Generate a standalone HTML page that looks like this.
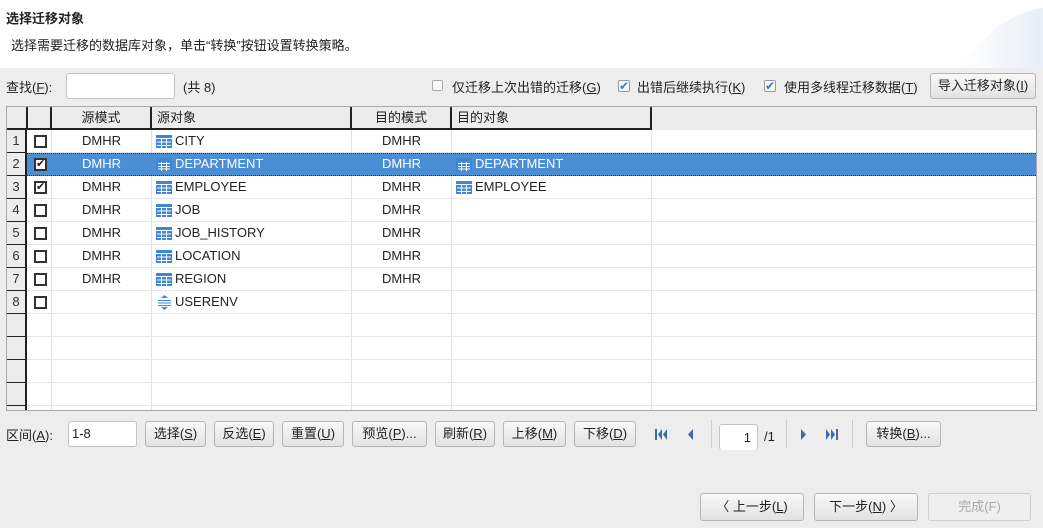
<!DOCTYPE html>
<html><head><meta charset="utf-8"><style>
*{margin:0;padding:0;box-sizing:border-box}
body{width:1043px;height:528px;background:#ededed;font:13px "Liberation Sans","Noto Sans CJK SC",sans-serif;color:#222;position:relative;overflow:hidden}
.a{position:absolute;white-space:nowrap}
.hdr{left:0;top:0;width:1043px;height:68px;background:#fff}
.btn{position:absolute;height:26px;border:1px solid #b5b5b5;border-radius:3px;background:linear-gradient(#f8f8f8,#e2e2e2);text-align:center;line-height:24px;font-size:13px;color:#222}
.inp{position:absolute;height:26px;border:1px solid #c3c3c3;border-radius:3px;background:#fff}
.tbl{left:6px;top:106px;width:1031px;height:305px;background:#fff;border:1px solid #a9a9a9;overflow:hidden}
.row{position:absolute;left:0;width:1031px;height:23px;border-bottom:1px solid #e6e6e6}
.num{position:absolute;left:0;top:0;width:20px;height:23px;background:#ececec;border-right:2px solid #222;border-bottom:1px solid #222;text-align:center;line-height:22px;font-size:13px;color:#333}
.c{position:absolute;top:0;line-height:22px}
.vl{position:absolute;top:0;width:1px;height:305px;background:#e3e3e3}
.cb{position:absolute;left:27px;top:5px;width:13px;height:13px;border:2px solid #333;background:#fff;font-size:11px;line-height:9px;text-align:center;color:#222}
.th{position:absolute;top:0;height:23px;background:#ececec;border-right:2px solid #222;border-bottom:2px solid #222;line-height:21px;font-size:13px}
.sel{background:#4a8fd6;color:#fff;border-top:1px dotted #333;border-bottom:1px dotted #333}
u{text-decoration:underline}
</style></head><body>
<div class="a hdr"></div>
<svg class="a" style="left:950px;top:0" width="93" height="68"><defs><linearGradient id="g" x1="0" x2="1"><stop offset="0" stop-color="#fff"/><stop offset="1" stop-color="#e8edf6"/></linearGradient></defs><path d="M10 68 Q45 15 93 8 L93 68Z" fill="url(#g)"/></svg>
<div class="a" style="left:6px;top:8px;font-weight:bold;font-size:13px">选择迁移对象</div>
<div class="a" style="left:11px;top:35px">选择需要迁移的数据库对象，单击“转换”按钮设置转换策略。</div>

<div class="a" style="left:6px;top:77px">查找(<u>F</u>):</div>
<div class="inp" style="left:66px;top:73px;width:109px"></div>
<div class="a" style="left:183px;top:77px">(共 8)</div>
<div class="a" style="left:432px;top:80px;width:11px;height:11px;border:1px solid #aaa;border-radius:2px;background:#fafafa"></div>
<div class="a" style="left:452px;top:77px">仅迁移上次出错的迁移(<u>G</u>)</div>
<div class="a" style="left:618px;top:80px;width:12px;height:12px;border:1px solid #999;border-radius:2px;background:#fafafa;color:#3a78c0;font-size:12px;line-height:10px;text-align:center">✔</div>
<div class="a" style="left:637px;top:77px">出错后继续执行(<u>K</u>)</div>
<div class="a" style="left:764px;top:80px;width:12px;height:12px;border:1px solid #999;border-radius:2px;background:#fafafa;color:#3a78c0;font-size:12px;line-height:10px;text-align:center">✔</div>
<div class="a" style="left:784px;top:77px">使用多线程迁移数据(<u>T</u>)</div>
<div class="btn" style="left:930px;top:73px;width:106px">导入迁移对象(<u>I</u>)</div>

<div class="a tbl">
<div class="vl" style="left:44px"></div><div class="vl" style="left:144px"></div><div class="vl" style="left:344px"></div><div class="vl" style="left:444px"></div><div class="vl" style="left:644px"></div>
<div class="th" style="left:0;width:21px"></div>
<div class="th" style="left:21px;width:24px"></div>
<div class="th" style="left:45px;width:100px;text-align:center">源模式</div>
<div class="th" style="left:145px;width:200px;padding-left:5px">源对象</div>
<div class="th" style="left:345px;width:100px;text-align:center">目的模式</div>
<div class="th" style="left:445px;width:200px;padding-left:5px">目的对象</div>
<div class="th" style="left:645px;width:400px;border:none;background:#ececec"></div>

<div class="row" style="top:23px"><div class="num">1</div><div class="cb"></div><div class="c" style="left:75px">DMHR</div><svg class="c" style="left:149px;top:5px" width="16" height="13"><rect width="16" height="13" fill="#3d86d8"/><path d="M0 3.5H16M1 7H15M1 10.5H15M5.5 4V13M10.5 4V13" stroke="#fff"/></svg><div class="c" style="left:168px">CITY</div><div class="c" style="left:375px">DMHR</div></div>
<div class="row sel" style="top:46px"><div class="num" style="top:-1px;height:23px">2</div><div class="cb" style="top:4px">&#10004;</div><div class="c" style="left:75px;top:-1px">DMHR</div><svg class="c" style="left:149px;top:4px" width="16" height="13"><rect width="16" height="13" fill="#3d86d8"/><path d="M2 5.5H14M2 8.5H14M2 11H14M5.5 4V13M10.5 4V13" stroke="#fff"/></svg><div class="c" style="left:168px;top:-1px">DEPARTMENT</div><div class="c" style="left:375px;top:-1px">DMHR</div><svg class="c" style="left:449px;top:4px" width="16" height="13"><rect width="16" height="13" fill="#3d86d8"/><path d="M2 5.5H14M2 8.5H14M2 11H14M5.5 4V13M10.5 4V13" stroke="#fff"/></svg><div class="c" style="left:468px;top:-1px">DEPARTMENT</div></div>
<div class="row" style="top:69px"><div class="num">3</div><div class="cb">&#10004;</div><div class="c" style="left:75px">DMHR</div><svg class="c" style="left:149px;top:5px" width="16" height="13"><rect width="16" height="13" fill="#3d86d8"/><path d="M0 3.5H16M1 7H15M1 10.5H15M5.5 4V13M10.5 4V13" stroke="#fff"/></svg><div class="c" style="left:168px">EMPLOYEE</div><div class="c" style="left:375px">DMHR</div><svg class="c" style="left:449px;top:5px" width="16" height="13"><rect width="16" height="13" fill="#3d86d8"/><path d="M0 3.5H16M1 7H15M1 10.5H15M5.5 4V13M10.5 4V13" stroke="#fff"/></svg><div class="c" style="left:468px">EMPLOYEE</div></div>
<div class="row" style="top:92px"><div class="num">4</div><div class="cb"></div><div class="c" style="left:75px">DMHR</div><svg class="c" style="left:149px;top:5px" width="16" height="13"><rect width="16" height="13" fill="#3d86d8"/><path d="M0 3.5H16M1 7H15M1 10.5H15M5.5 4V13M10.5 4V13" stroke="#fff"/></svg><div class="c" style="left:168px">JOB</div><div class="c" style="left:375px">DMHR</div></div>
<div class="row" style="top:115px"><div class="num">5</div><div class="cb"></div><div class="c" style="left:75px">DMHR</div><svg class="c" style="left:149px;top:5px" width="16" height="13"><rect width="16" height="13" fill="#3d86d8"/><path d="M0 3.5H16M1 7H15M1 10.5H15M5.5 4V13M10.5 4V13" stroke="#fff"/></svg><div class="c" style="left:168px">JOB_HISTORY</div><div class="c" style="left:375px">DMHR</div></div>
<div class="row" style="top:138px"><div class="num">6</div><div class="cb"></div><div class="c" style="left:75px">DMHR</div><svg class="c" style="left:149px;top:5px" width="16" height="13"><rect width="16" height="13" fill="#3d86d8"/><path d="M0 3.5H16M1 7H15M1 10.5H15M5.5 4V13M10.5 4V13" stroke="#fff"/></svg><div class="c" style="left:168px">LOCATION</div><div class="c" style="left:375px">DMHR</div></div>
<div class="row" style="top:161px"><div class="num">7</div><div class="cb"></div><div class="c" style="left:75px">DMHR</div><svg class="c" style="left:149px;top:5px" width="16" height="13"><rect width="16" height="13" fill="#3d86d8"/><path d="M0 3.5H16M1 7H15M1 10.5H15M5.5 4V13M10.5 4V13" stroke="#fff"/></svg><div class="c" style="left:168px">REGION</div><div class="c" style="left:375px">DMHR</div></div>
<div class="row" style="top:184px"><div class="num">8</div><div class="cb"></div><svg class="c" style="left:150px;top:4px" width="15" height="15"><path d="M7.5 0L11 3H4Z M7.5 15L11 12H4Z" fill="#3d86d8"/><path d="M1 5.5H14M1 8H14M1 10.5H14" stroke="#3d86d8"/></svg><div class="c" style="left:168px">USERENV</div></div>
<div class="row" style="top:207px"><div class="num"></div></div>
<div class="row" style="top:230px"><div class="num"></div></div>
<div class="row" style="top:253px"><div class="num"></div></div>
<div class="row" style="top:276px"><div class="num"></div></div>
<div class="row" style="top:299px"><div class="num"></div></div>
</div>

<div class="a" style="left:6px;top:425px">区间(<u>A</u>):</div>
<div class="inp" style="left:68px;top:421px;width:69px;line-height:24px;padding-left:3px">1-8</div>
<div class="btn" style="left:145px;top:421px;width:61px">选择(<u>S</u>)</div>
<div class="btn" style="left:214px;top:421px;width:60px">反选(<u>E</u>)</div>
<div class="btn" style="left:282px;top:421px;width:62px">重置(<u>U</u>)</div>
<div class="btn" style="left:352px;top:421px;width:75px">预览(<u>P</u>)...</div>
<div class="btn" style="left:435px;top:421px;width:60px">刷新(<u>R</u>)</div>
<div class="btn" style="left:503px;top:421px;width:63px">上移(<u>M</u>)</div>
<div class="btn" style="left:574px;top:421px;width:62px">下移(<u>D</u>)</div>
<svg class="a" style="left:655px;top:428px" width="12" height="13"><rect x="0" y="1" width="2" height="11" fill="#3a6ea8"/><path d="M7 1L3 6.5 7 12Z M12 1L8 6.5 12 12Z" fill="#3a6ea8"/></svg>
<svg class="a" style="left:686px;top:428px" width="8" height="13"><path d="M7 1L2 6.5 7 12Z" fill="#3a6ea8"/></svg>
<div class="a" style="left:711px;top:420px;width:1px;height:28px;background:#ccc"></div>
<div class="inp" style="left:719px;top:424px;width:39px;height:26px;border-bottom:none;text-align:right;padding-right:6px;line-height:26px">1</div>
<div class="a" style="left:764px;top:429px">/1</div>
<div class="a" style="left:786px;top:420px;width:1px;height:28px;background:#ccc"></div>
<svg class="a" style="left:800px;top:428px" width="8" height="13"><path d="M1 1L6 6.5 1 12Z" fill="#3a6ea8"/></svg>
<svg class="a" style="left:826px;top:428px" width="12" height="13"><path d="M0 1L4 6.5 0 12Z M5 1L9 6.5 5 12Z" fill="#3a6ea8"/><rect x="10" y="1" width="2" height="11" fill="#3a6ea8"/></svg>
<div class="a" style="left:852px;top:420px;width:1px;height:28px;background:#ccc"></div>
<div class="btn" style="left:866px;top:421px;width:75px">转换(<u>B</u>)...</div>

<div class="btn" style="left:700px;top:493px;width:104px;height:28px;line-height:26px">〈 上一步(<u>L</u>)</div>
<div class="btn" style="left:814px;top:493px;width:104px;height:28px;line-height:26px">下一步(<u>N</u>) 〉</div>
<div class="btn" style="left:928px;top:493px;width:103px;height:28px;line-height:26px;color:#aaa;background:#efefef;border-color:#cfcfcf">完成(F)</div>
</body></html>
